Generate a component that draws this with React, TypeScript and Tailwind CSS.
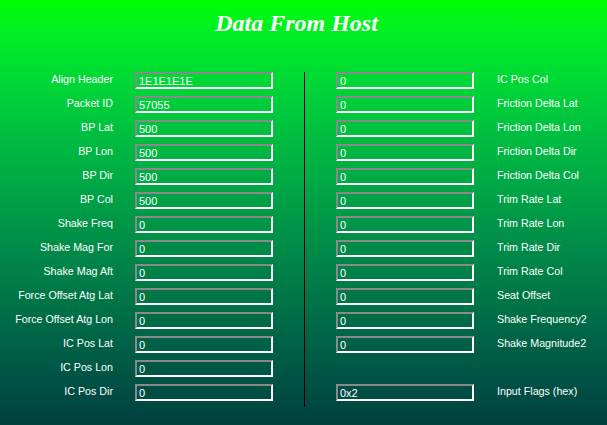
import React from "react";

type Field = { label: string; value: string };

const leftFields: Field[] = [
  { label: "Align Header", value: "1E1E1E1E" },
  { label: "Packet ID", value: "57055" },
  { label: "BP Lat", value: "500" },
  { label: "BP Lon", value: "500" },
  { label: "BP Dir", value: "500" },
  { label: "BP Col", value: "500" },
  { label: "Shake Freq", value: "0" },
  { label: "Shake Mag For", value: "0" },
  { label: "Shake Mag Aft", value: "0" },
  { label: "Force Offset Atg Lat", value: "0" },
  { label: "Force Offset Atg Lon", value: "0" },
  { label: "IC Pos Lat", value: "0" },
  { label: "IC Pos Lon", value: "0" },
  { label: "IC Pos Dir", value: "0" },
];

// null = empty spacer row
const rightFields: (Field | null)[] = [
  { label: "IC Pos Col", value: "0" },
  { label: "Friction Delta Lat", value: "0" },
  { label: "Friction Delta Lon", value: "0" },
  { label: "Friction Delta Dir", value: "0" },
  { label: "Friction Delta Col", value: "0" },
  { label: "Trim Rate Lat", value: "0" },
  { label: "Trim Rate Lon", value: "0" },
  { label: "Trim Rate Dir", value: "0" },
  { label: "Trim Rate Col", value: "0" },
  { label: "Seat Offset", value: "0" },
  { label: "Shake Frequency2", value: "0" },
  { label: "Shake Magnitude2", value: "0" },
  null,
  { label: "Input Flags (hex)", value: "0x2" },
];

function ValueBox({ value }: { value: string }) {
  return (
    <div className="w-[138px] h-[17px] border-2 border-t-[#8a8a8a] border-l-[#8a8a8a] border-b-white border-r-white pl-[2px] text-[11px] leading-[15px] text-white overflow-hidden whitespace-nowrap">
      {value}
    </div>
  );
}

export default function App() {
  return (
    <div
      className="w-[607px] h-[425px] bg-gradient-to-b from-[#00ff00] to-[#004040] text-white overflow-hidden"
      style={{ fontFamily: '"Liberation Sans", Arial, sans-serif' }}
    >
      <div className="h-[72px] pt-[9px] pr-[14px] text-center">
        <h1
          className="text-[24px] leading-[28px] font-bold italic text-white"
          style={{ fontFamily: '"Liberation Serif", "Times New Roman", serif' }}
        >
          Data From Host
        </h1>
      </div>

      <div className="flex items-start">
        {/* left column: label then box */}
        <div className="flex flex-col gap-[7px]">
          {leftFields.map((f) => (
            <div key={f.label} className="flex h-[17px]">
              <div className="w-[113px] text-right text-[10.7px] leading-[15px] whitespace-nowrap">
                {f.label}
              </div>
              <div className="ml-[22px]">
                <ValueBox value={f.value} />
              </div>
            </div>
          ))}
        </div>

        <div className="ml-[31px] w-px h-[335px] bg-black" />

        {/* right column: box then label */}
        <div className="ml-[31px] flex flex-col gap-[7px]">
          {rightFields.map((f, i) =>
            f ? (
              <div key={f.label} className="flex h-[17px]">
                <ValueBox value={f.value} />
                <div className="ml-[23px] text-[10.7px] leading-[15px] whitespace-nowrap">
                  {f.label}
                </div>
              </div>
            ) : (
              <div key={"gap" + i} className="h-[17px]" />
            )
          )}
        </div>
      </div>
    </div>
  );
}
